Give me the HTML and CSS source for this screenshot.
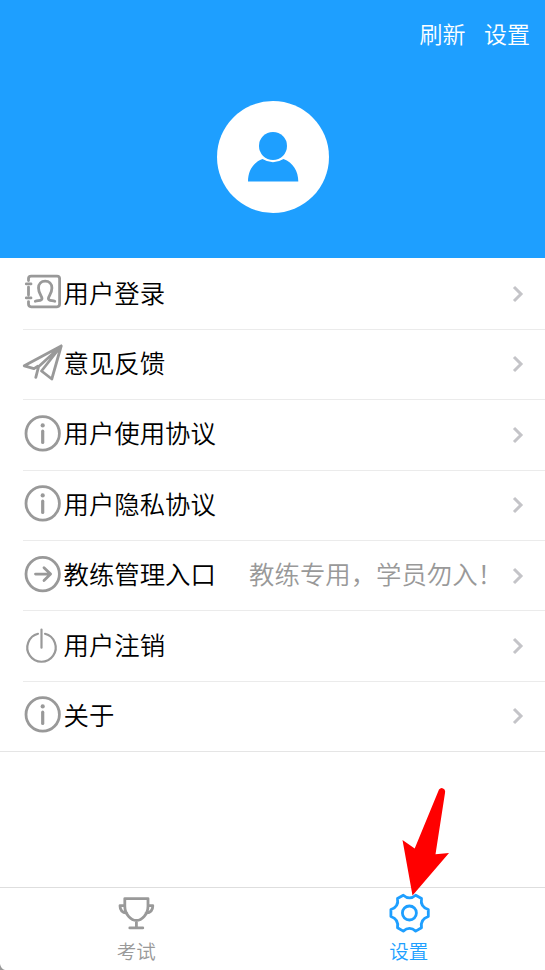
FILE: index.html
```html
<!DOCTYPE html>
<html lang="zh-CN">
<head>
<meta charset="utf-8">
<title>设置</title>
<link rel="stylesheet" href="styles.css">
</head>
<body>
<svg class="defs" width="0" height="0">
  <symbol id="info" viewBox="0 0 42 44"><circle cx="21.7" cy="20.400" r="16.7"/><path d="M21.7 18.2V29.500" class="stem"/><circle cx="21.7" cy="12.4" r="2.100" class="dot"/></symbol>
  <symbol id="chevron" viewBox="0 0 12 18"><path d="M2 2l7 7-7 7"/></symbol>
</svg>
<div class="app">
  <header class="hero">
    <nav class="actions"><span>刷新</span><span>设置</span></nav>
    <div class="avatar">
      <svg width="112" height="112" viewBox="217 101 112 112"><path d="M248 181.500C248 171 253 162.500 262.500 159Q273 165.500 283.500 159C293 162.500 298.300 171 298.300 181.500Z"/><circle cx="273" cy="146" r="14"/></svg>
    </div>
  </header>
  <main class="list">
    <div class="row">
      <svg class="icon" viewBox="21 272.400 42 44"><path d="M28.500 281V279Q28.500 276.500 31.200 276.500H57Q59.600 276.500 59.600 279V304.500Q59.600 307.200 57 307.200H31.200Q28.500 307.200 28.500 304.500V302M28.500 287.500V295.500M26.300 284.300H31M26.300 298.300H31"/><path d="M35.300 301.700C38 300.700 41.800 301.500 42 299C42.200 296.500 38.500 294.500 38.500 288.500C38.500 284 41.300 281.600 45.200 281.600S51.900 284 51.900 288.500C51.900 294.500 48.200 296.500 48.400 299C48.600 301.500 52.200 300.700 54.800 301.700"/></svg>
      <span class="label">用户登录</span><svg class="chevron"><use href="#chevron"/></svg>
    </div>
    <div class="row">
      <svg class="icon" viewBox="21 342.200 42 44"><path d="M61.200 346.200L24.300 366L34 368.800L37.500 366.500M61.200 346.200L51.800 379.200L41.500 371.200ZM61.200 346.200L38.500 367L35.800 377.500"/></svg>
      <span class="label">意见反馈</span><svg class="chevron"><use href="#chevron"/></svg>
    </div>
    <div class="row"><svg class="icon"><use href="#info"/></svg><span class="label">用户使用协议</span><svg class="chevron"><use href="#chevron"/></svg></div>
    <div class="row"><svg class="icon"><use href="#info"/></svg><span class="label">用户隐私协议</span><svg class="chevron"><use href="#chevron"/></svg></div>
    <div class="row">
      <svg class="icon" viewBox="0 0 42 44"><circle cx="21.700" cy="20.100" r="16.700"/><path d="M14.500 20.100H29.500M23 13.700L29.600 20.100L23 26.500"/></svg>
      <span class="label">教练管理入口</span><span class="hint">教练专用，学员勿入！</span><svg class="chevron"><use href="#chevron"/></svg>
    </div>
    <div class="row">
      <svg class="icon" viewBox="21 623.800 42 44"><path d="M38 633.600A14.200 14.200 0 1 0 45 633.600M41.500 629.300V647.500" class="power"/></svg>
      <span class="label">用户注销</span><svg class="chevron"><use href="#chevron"/></svg>
    </div>
    <div class="row"><svg class="icon"><use href="#info"/></svg><span class="label">关于</span><svg class="chevron"><use href="#chevron"/></svg></div>
  </main>
  <footer class="tabs">
    <div class="tab">
      <svg class="tab-icon" viewBox="114.200 890.800 44 44"><path d="M125 898.400H148.200V906C148.200 914 142 920.300 136.600 920.300S125 914 125 906ZM125 905.500H120.200C120.200 910 122.500 912.500 127 913M148.200 905.500H153C153 910 150.700 912.500 146.200 913M136.600 920.300V927.500M130 927.700H143"/></svg>
      <span>考试</span>
    </div>
    <div class="tab active">
      <svg class="tab-icon" viewBox="387 890.700 44 44"><path d="M403.300 894.900Q409.500 900.300 415.700 894.900L421.500 898.200Q420 906.500 428.300 909.200V916.200Q420 919 421.500 927.400L415.700 930.800Q409.500 925.300 403.300 930.800L397.500 927.400Q399 919 390.900 916.200V909.200Q399 906.500 397.500 898.200Z"/><circle cx="409.400" cy="912.700" r="7"/></svg>
      <span>设置</span>
    </div>
  </footer>
  <svg class="pointer" width="50" height="110" viewBox="400 786 50 110"><path d="M439 789.500Q441.500 786.500 444.500 789.500Q445.500 791 445 793L435.500 854.300L449 853L412.500 895.500L402.500 840L414.700 848.500Z"/></svg>
  <svg class="corner" width="7" height="7" viewBox="0 0 7 7"><path d="M0 1Q1 6 5 7H0Z"/></svg>
</div>
</body>
</html>
```

FILE: styles.css
```css
* { box-sizing: border-box; }
body {
  margin: 0;
  background: #fff;
  color: #000;
  font-family: "Noto Sans CJK SC", sans-serif;
  font-weight: 350;
}
.defs { position: absolute; }
.app {
  position: relative;
  display: flex;
  flex-direction: column;
  height: 970px;
  overflow: hidden;
}
.hero {
  height: 258px;
  background: #1e9fff;
  display: flex;
  flex-direction: column;
  align-items: center;
}
.actions {
  align-self: flex-end;
  display: flex;
  gap: 18.500px;
  padding: 16px 15px 0 0;
  height: 101px;
  font-size: 23px;
  line-height: 34px;
  color: #fff;
}
.avatar {
  width: 112px;
  height: 112px;
  border-radius: 50%;
  background: #fff;
}
.avatar svg { display: block; fill: #1e9fff; }
.list {
  padding-top: 1.400px;
  border-bottom: 1px solid #e5e5e5;
}
.row {
  height: 70.400px;
  display: flex;
  align-items: center;
  margin-left: 23px;
  padding-right: 21px;
  border-bottom: 1px solid #ebebeb;
}
.row:last-child {
  height: 69.200px;
  border-bottom: 0;
}
.icon {
  flex: none;
  width: 42px;
  height: 44px;
  margin-left: -2px;
  fill: none;
  stroke: #999;
  stroke-width: 2.800;
  stroke-linecap: round;
  stroke-linejoin: round;
}
.dot { fill: #999; stroke: none; }
.stem { stroke-width: 3.200; }
.power { stroke-width: 2.200; }
.label,
.hint {
  padding-bottom: 5px;
  font-size: 25.400px;
  line-height: 38px;
  white-space: nowrap;
}
.label { margin-left: 0.500px; }
.hint {
  margin-left: auto;
  margin-right: 9px;
  color: #999;
}
.chevron {
  flex: none;
  width: 12px;
  height: 18px;
  margin-left: auto;
  fill: none;
  stroke: #c4c4c8;
  stroke-width: 3;
}
.hint + .chevron { margin-left: 0; }
.tabs {
  display: flex;
  height: 83px;
  margin-top: auto;
  border-top: 1px solid #dedede;
}
.tab {
  flex: 1;
  display: flex;
  flex-direction: column;
  align-items: center;
  padding-top: 3px;
  color: #999;
  font-size: 19.500px;
  line-height: 32px;
}
.tab.active { color: #1e9fff; }
.tab-icon {
  width: 44px;
  height: 44px;
  fill: none;
  stroke: currentColor;
  stroke-width: 2.800;
  stroke-linecap: round;
  stroke-linejoin: round;
}
.pointer {
  position: absolute;
  left: 400px;
  top: 786px;
  fill: #f00;
}
.corner {
  position: absolute;
  left: 0;
  bottom: 0;
  fill: #999;
}
```
